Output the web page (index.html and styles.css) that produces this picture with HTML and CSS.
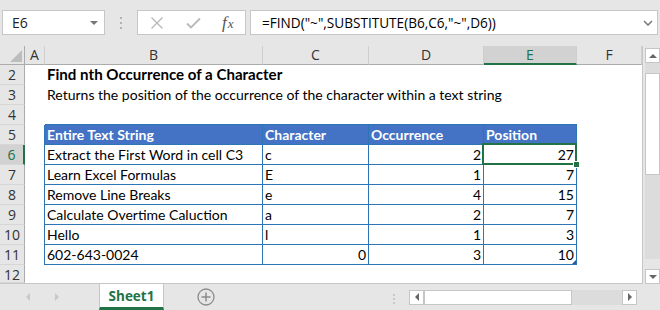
FILE: index.html
```html
<!DOCTYPE html>
<html lang="en">
<head>
  <meta charset="UTF-8">
  <title>Find nth Occurrence of a Character</title>
  <link rel="stylesheet" href="styles.css">
</head>
<body>

  <div class="top">
    <div class="name-box"><span>E6</span><span class="caret"></span></div>
    <span class="grip"></span>
    <div class="fx-buttons">
      <svg class="btn-x" width="14" height="14" viewBox="0 0 14 14"><path d="M1.5 1.5 L12.5 12.5 M12.5 1.5 L1.5 12.5" stroke="#b9b9b9" stroke-width="1.4" fill="none"/></svg>
      <svg class="btn-ok" width="15" height="12" viewBox="0 0 15 12"><path d="M1 6.5 L5 10.5 L14 1.5" stroke="#b9b9b9" stroke-width="1.8" fill="none"/></svg>
      <span class="fx"><i>f</i><i class="x">x</i></span>
    </div>
    <div class="formula">
      <span>=FIND("~",SUBSTITUTE(B6,C6,"~",D6))</span>
      <svg width="10" height="6" viewBox="0 0 10 6"><path d="M1 1 L5 5 L9 1" stroke="#777" stroke-width="1.5" fill="none"/></svg>
    </div>
  </div>

  <div class="main">
    <div class="sheet">
      <div class="corner"><span class="tri"></span></div>
      <div class="ch">A</div>
      <div class="ch">B</div>
      <div class="ch">C</div>
      <div class="ch">D</div>
      <div class="ch sel">E</div>
      <div class="ch">F</div>

      <div class="rh">2</div>
      <div class="c"></div>
      <div class="c title">Find nth Occurrence of a Character</div>
      <div class="c"></div><div class="c"></div><div class="c"></div><div class="c"></div>

      <div class="rh">3</div>
      <div class="c"></div>
      <div class="c">Returns the position of the occurrence of the character within a text string</div>
      <div class="c"></div><div class="c"></div><div class="c"></div><div class="c"></div>

      <div class="rh">4</div>
      <div class="c"></div>
      <div class="c edge-top"></div><div class="c edge-top"></div><div class="c edge-top"></div><div class="c edge-top"></div>
      <div class="c"></div>

      <div class="rh">5</div>
      <div class="c edge-left"></div>
      <div class="c tb th">Entire Text String</div>
      <div class="c tb th">Character</div>
      <div class="c tb th">Occurrence</div>
      <div class="c tb th">Position</div>
      <div class="c"></div>

      <div class="rh sel">6</div>
      <div class="c edge-left"></div>
      <div class="c tb">Extract the First Word in cell C3</div>
      <div class="c tb">c</div>
      <div class="c tb num">2</div>
      <div class="c tb num active">27</div>
      <div class="c"></div>

      <div class="rh">7</div>
      <div class="c edge-left"></div>
      <div class="c tb">Learn Excel Formulas</div>
      <div class="c tb">E</div>
      <div class="c tb num">1</div>
      <div class="c tb num">7</div>
      <div class="c"></div>

      <div class="rh">8</div>
      <div class="c edge-left"></div>
      <div class="c tb">Remove Line Breaks</div>
      <div class="c tb">e</div>
      <div class="c tb num">4</div>
      <div class="c tb num">15</div>
      <div class="c"></div>

      <div class="rh">9</div>
      <div class="c edge-left"></div>
      <div class="c tb">Calculate Overtime Caluction</div>
      <div class="c tb">a</div>
      <div class="c tb num">2</div>
      <div class="c tb num">7</div>
      <div class="c"></div>

      <div class="rh">10</div>
      <div class="c edge-left"></div>
      <div class="c tb">Hello</div>
      <div class="c tb">l</div>
      <div class="c tb num">1</div>
      <div class="c tb num">3</div>
      <div class="c"></div>

      <div class="rh">11</div>
      <div class="c edge-left"></div>
      <div class="c tb">602-643-0024</div>
      <div class="c tb num">0</div>
      <div class="c tb num">3</div>
      <div class="c tb num last">10</div>
      <div class="c"></div>

      <div class="rh">12</div>
      <div class="c"></div><div class="c"></div><div class="c"></div><div class="c"></div><div class="c"></div><div class="c"></div>
    </div>

    <div class="vscroll">
      <div class="sbtn"><span class="arr-up"></span></div>
      <div class="vtrack">
        <div class="vthumb"></div>
      </div>
      <div class="sbtn"><span class="arr-down"></span></div>
    </div>
  </div>

  <div class="tabs">
    <div class="nav">
      <span class="arr-left light"></span>
      <span class="arr-right light"></span>
    </div>
    <div class="tab">Sheet1</div>
    <div class="add">
      <svg width="18" height="18" viewBox="0 0 18 18"><circle cx="9" cy="9" r="8" stroke="#8c8c8c" stroke-width="1.3" fill="none"/><path d="M9 4.5 V13.5 M4.5 9 H13.5" stroke="#8c8c8c" stroke-width="1.5"/></svg>
    </div>
    <span class="grip small"></span>
    <div class="hscroll">
      <div class="sbtn h"><span class="arr-left"></span></div>
      <div class="hthumb"></div>
      <div class="htrack"></div>
      <div class="sbtn h"><span class="arr-right"></span></div>
    </div>
  </div>

</body>
</html>
```

FILE: styles.css
```css
body {
  margin: 0;
  width: 660px;
  height: 310px;
  overflow: hidden;
  background-color: #e6e6e6;
  font-family: "Open Sans", sans-serif;
  color: #222;
}

/* formula bar */
.top {
  height: 46px;
  display: flex;
  align-items: flex-start;
  padding-top: 10px;
  box-sizing: border-box;
}

.name-box {
  margin-left: 2px;
  width: 103px;
  height: 25px;
  box-sizing: border-box;
  border: 1px solid #c6c6c6;
  background-color: #fff;
  display: flex;
  align-items: center;
  justify-content: space-between;
  padding: 0 6px 0 9px;
  font-size: 14px;
}

.caret {
  width: 0;
  height: 0;
  border-left: 4px solid transparent;
  border-right: 4px solid transparent;
  border-top: 4px solid #777;
}

.grip {
  width: 2px;
  height: 2px;
  margin: 7px 0 0 15px;
  background-color: #b3b3b3;
  box-shadow: 0 5px #b3b3b3, 0 10px #b3b3b3;
}

.fx-buttons {
  margin-left: 15px;
  width: 109px;
  height: 25px;
  box-sizing: border-box;
  border: 1px solid #c6c6c6;
  background-color: #fff;
  display: flex;
  align-items: center;
}

.btn-x {
  margin-left: 12px;
}

.btn-ok {
  margin-left: 22px;
}

.fx {
  margin-left: 21px;
  font-family: "Liberation Serif", serif;
  font-size: 17px;
  color: #555;
  line-height: 1;
}

.fx .x {
  font-size: 13px;
  margin-left: 1px;
}

.formula {
  margin-left: 4px;
  width: 408px;
  height: 25px;
  box-sizing: border-box;
  border: 1px solid #c6c6c6;
  background-color: #fff;
  display: flex;
  align-items: center;
  justify-content: space-between;
  padding: 0 4px 0 11px;
  font-size: 13.6px;
  color: #000;
}

/* grid */
.main {
  display: flex;
  height: 238px;
}

.sheet {
  display: grid;
  grid-template-columns: 25px 20px 218px 106px 115px 93px 65px;
  grid-template-rows: 19px repeat(10, 20px) 18px;
  width: 642px;
  border-right: 1px solid #c6c6c6;
  border-bottom: 1px solid #c6c6c6;
  overflow: hidden;
  background-color: #fff;
  font-family: Lato, sans-serif;
  font-size: 14px;
  color: #000;
}

.sheet > div {
  box-sizing: border-box;
  min-width: 0;
}

.corner {
  background-color: #e6e6e6;
  border-right: 1px solid #ababab;
  border-bottom: 1px solid #ababab;
  display: flex;
  justify-content: flex-end;
  align-items: flex-end;
  padding: 0 2px 2px 0;
}

.tri {
  width: 0;
  height: 0;
  border-left: 12px solid transparent;
  border-bottom: 12px solid #bdbdbd;
}

.ch {
  background-color: #e6e6e6;
  border-right: 1px solid #cfcfcf;
  border-bottom: 1px solid #ababab;
  font-family: "Open Sans", sans-serif;
  font-size: 14px;
  color: #333;
  text-align: center;
  line-height: 18px;
}

.ch.sel {
  background-color: #d2d2d2;
  border-bottom: 2px solid #217346;
  color: #217346;
}

.rh {
  background-color: #e6e6e6;
  border-right: 1px solid #ababab;
  border-bottom: 1px solid #d6d6d6;
  font-family: "Open Sans", sans-serif;
  font-size: 14px;
  color: #333;
  text-align: center;
  line-height: 20px;
}

.rh.sel {
  background-color: #d2d2d2;
  border-right: 2px solid #217346;
  color: #217346;
}

.c {
  padding: 0 2px;
  line-height: 19px;
  white-space: nowrap;
}

.title {
  font-weight: bold;
  font-size: 15.1px;
}

.edge-top {
  border-bottom: 1px solid #2e75b6;
}

.edge-left {
  border-right: 1px solid #2e75b6;
}

.tb {
  border-right: 1px solid #2e75b6;
  border-bottom: 1px solid #2e75b6;
}

.th {
  background-color: #4472c4;
  color: #fff;
  font-weight: bold;
}

.num {
  text-align: right;
}

.active {
  position: relative;
}

.active::after {
  content: "";
  position: absolute;
  left: -2px;
  top: -2px;
  right: -1px;
  bottom: -1px;
  border: 2px solid #217346;
}

.active::before {
  content: "";
  position: absolute;
  right: -4px;
  bottom: -4px;
  width: 5px;
  height: 5px;
  background-color: #217346;
  border: 1px solid #fff;
  z-index: 1;
}

.last {
  position: relative;
}

.last::after {
  content: "";
  position: absolute;
  right: 0;
  bottom: 0;
  width: 0;
  height: 0;
  border-left: 4px solid transparent;
  border-bottom: 4px solid #2f5597;
}

/* scroll bars */
.vscroll {
  width: 17px;
  display: flex;
  flex-direction: column;
  padding: 2px 0 0 2px;
  box-sizing: border-box;
}

.sbtn {
  width: 15px;
  height: 15px;
  box-sizing: border-box;
  border: 1px solid #c6c6c6;
  background-color: #fff;
  display: flex;
  align-items: center;
  justify-content: center;
}

.vtrack {
  flex: 1;
  background-color: #dcdcdc;
  padding-top: 10px;
  margin-bottom: 10px;
}

.vthumb {
  height: 102px;
  box-sizing: border-box;
  border: 1px solid #c6c6c6;
  background-color: #fff;
}

.arr-up {
  border-left: 4px solid transparent;
  border-right: 4px solid transparent;
  border-bottom: 4px solid #666;
}

.arr-down {
  border-left: 4px solid transparent;
  border-right: 4px solid transparent;
  border-top: 4px solid #666;
}

.arr-left {
  border-top: 4px solid transparent;
  border-bottom: 4px solid transparent;
  border-right: 4px solid #666;
}

.arr-right {
  border-top: 4px solid transparent;
  border-bottom: 4px solid transparent;
  border-left: 4px solid #666;
}

.arr-left.light {
  border-right-color: #c8c8c8;
}

.arr-right.light {
  border-left-color: #c8c8c8;
}

/* sheet tabs */
.tabs {
  height: 26px;
  display: flex;
  align-items: center;
}

.nav {
  width: 99px;
  display: flex;
  align-items: center;
  gap: 25px;
  padding-left: 26px;
  box-sizing: border-box;
}

.tab {
  align-self: stretch;
  width: 65px;
  box-sizing: border-box;
  background-color: #fff;
  border-left: 1px solid #c6c6c6;
  border-right: 1px solid #c6c6c6;
  border-bottom: 3px solid #217346;
  color: #217346;
  font-family: "Open Sans", sans-serif;
  font-size: 13.5px;
  font-weight: bold;
  text-align: center;
  line-height: 24px;
}

.add {
  margin-left: 33px;
  display: flex;
}

.grip.small {
  margin: -4px 0 0 178px;
  background-color: #c8c8c8;
  box-shadow: 0 4px #c8c8c8, 0 8px #c8c8c8;
}

.hscroll {
  margin-left: 14px;
  width: 228px;
  height: 15px;
  display: flex;
}

.sbtn.h {
  width: 15px;
}

.hthumb {
  width: 148px;
  box-sizing: border-box;
  border: 1px solid #c6c6c6;
  background-color: #fff;
}

.htrack {
  flex: 1;
  background-color: #dcdcdc;
}
```
